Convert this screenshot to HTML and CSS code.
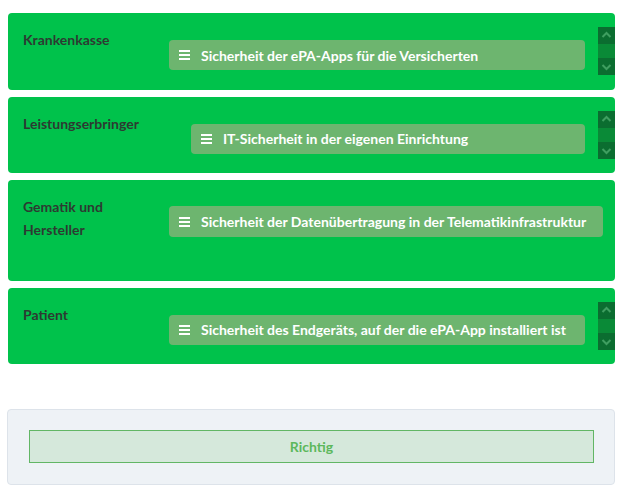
FILE: index.html
```html
<!DOCTYPE html>
<html lang="de">
<head>
<meta charset="utf-8">
<link rel="stylesheet" href="styles.css">
</head>
<body>
<div class="cards">
  <div class="card">
    <div class="label">Krankenkasse</div>
    <div class="zone zone-scroll">
      <div class="chip"><span class="burger"><i></i><i></i><i></i></span>Sicherheit der ePA-Apps für die Versicherten</div>
    </div>
    <div class="scroll">
      <div class="arr"><svg viewBox="0 0 17 17" width="17" height="17"><path d="M4.5 10 L8.5 6 L12.5 10" fill="none" stroke="#3f9e60" stroke-width="2"/></svg></div>
      <div class="mid"></div>
      <div class="arr"><svg viewBox="0 0 17 17" width="17" height="17"><path d="M4.5 7 L8.5 11 L12.5 7" fill="none" stroke="#3f9e60" stroke-width="2"/></svg></div>
    </div>
  </div>
  <div class="card">
    <div class="label">Leistungserbringer</div>
    <div class="zone zone-scroll">
      <div class="chip"><span class="burger"><i></i><i></i><i></i></span>IT-Sicherheit in der eigenen Einrichtung</div>
    </div>
    <div class="scroll">
      <div class="arr"><svg viewBox="0 0 17 17" width="17" height="17"><path d="M4.5 10 L8.5 6 L12.5 10" fill="none" stroke="#3f9e60" stroke-width="2"/></svg></div>
      <div class="mid"></div>
      <div class="arr"><svg viewBox="0 0 17 17" width="17" height="17"><path d="M4.5 7 L8.5 11 L12.5 7" fill="none" stroke="#3f9e60" stroke-width="2"/></svg></div>
    </div>
  </div>
  <div class="card">
    <div class="label label-two">Gematik und<br>Hersteller</div>
    <div class="zone">
      <div class="chip chip-high"><span class="burger"><i></i><i></i><i></i></span>Sicherheit der Datenübertragung in der Telematikinfrastruktur</div>
    </div>
  </div>
  <div class="card">
    <div class="label">Patient</div>
    <div class="zone zone-scroll">
      <div class="chip"><span class="burger"><i></i><i></i><i></i></span>Sicherheit des Endgeräts, auf der die ePA-App installiert ist</div>
    </div>
    <div class="scroll">
      <div class="arr"><svg viewBox="0 0 17 17" width="17" height="17"><path d="M4.5 10 L8.5 6 L12.5 10" fill="none" stroke="#3f9e60" stroke-width="2"/></svg></div>
      <div class="mid"></div>
      <div class="arr"><svg viewBox="0 0 17 17" width="17" height="17"><path d="M4.5 7 L8.5 11 L12.5 7" fill="none" stroke="#3f9e60" stroke-width="2"/></svg></div>
    </div>
  </div>
</div>
<div class="result">
  <div class="btn">Richtig</div>
</div>
</body>
</html>
```

FILE: styles.css
```css
html, body { margin: 0; padding: 0; background: #fff; }
body {
  padding: 13px 9px 0 8px;
  font-family: Lato, "Open Sans", sans-serif;
  font-size: 14px;
}
.cards { display: flex; flex-direction: column; gap: 7px; }
.card {
  display: flex;
  align-items: flex-start;
  background: #00c24b;
  border-radius: 4px;
  padding: 15px 0 15.5px 15px;
}
.label {
  min-width: 94px;
  line-height: 23px;
  margin-bottom: 23px;
  color: #2d3a32;
  font-weight: 700;
}
.label-two { margin-bottom: 24px; }
.zone { flex: 1; margin: 12px 12px 0 52px; }
.zone-scroll { margin-right: 13px; }
.chip {
  display: flex;
  align-items: center;
  height: 30px;
  background: #6db56f;
  border-radius: 4px;
  padding-left: 10px;
  color: #fff;
  font-weight: 700;
}
.chip-high { margin-top: -1px; height: 31px; }
.burger { display: flex; flex-direction: column; gap: 2px; width: 11px; margin-right: 11px; }
.burger i { display: block; height: 2px; background: #fff; }
.scroll { width: 17px; margin-top: -1px; margin-bottom: -2px; display: flex; flex-direction: column; }
.arr { height: 17px; background: #0b6d30; }
.arr svg { display: block; }
.mid { height: 14px; background: #0a8a37; }
.result {
  margin-top: 45px;
  margin-left: -1px;
  background: #eef2f6;
  border: 1px solid #dde3ea;
  border-radius: 4px;
  padding: 20px 20px 21px 21px;
}
.btn {
  height: 31px;
  line-height: 31px;
  background: #d5e8db;
  border: 1px solid #62b665;
  text-align: center;
  color: #5cb85c;
  font-weight: 700;
}
```
